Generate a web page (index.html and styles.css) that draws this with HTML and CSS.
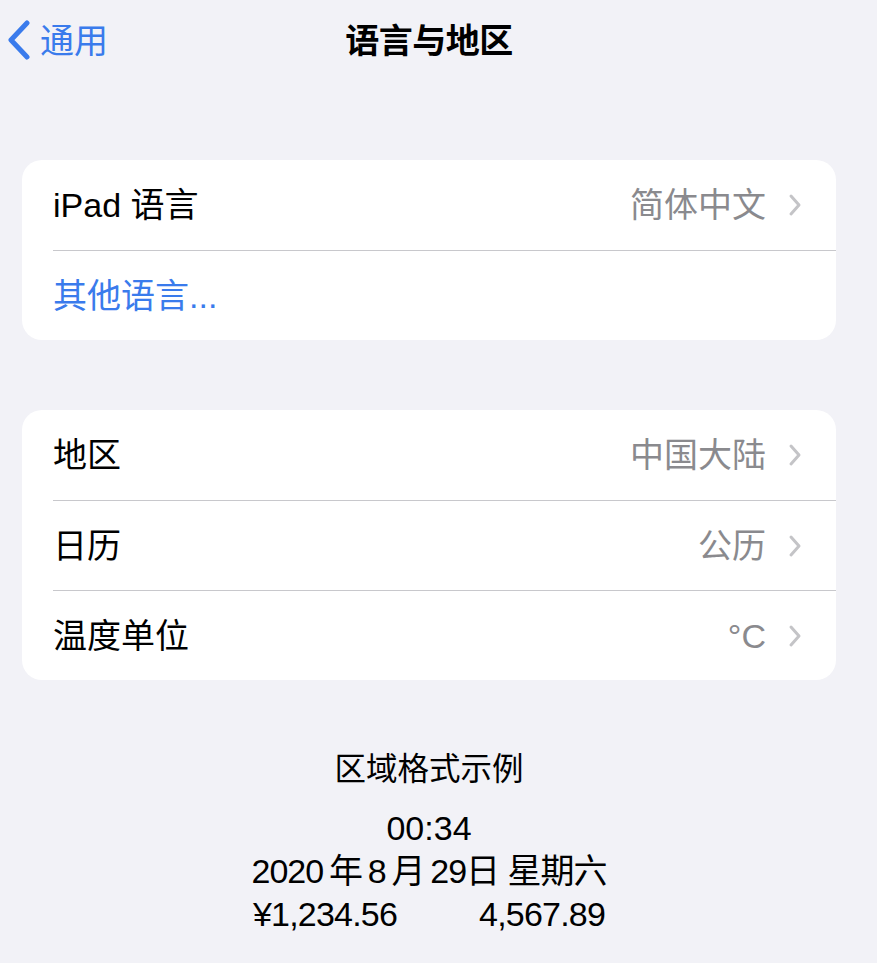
FILE: index.html
```html
<!DOCTYPE html>
<html lang="zh-CN">
<head>
<meta charset="utf-8">
<title>语言与地区</title>
<link rel="stylesheet" href="styles.css">
</head>
<body>
<div class="screen">
  <header class="nav">
    <a class="back">
      <svg class="back-icon" width="25" height="40" viewBox="0 0 25 40"><path d="M21 3 L5 20 L21 37" fill="none" stroke="currentColor" stroke-width="5" stroke-linecap="round" stroke-linejoin="round"/></svg>
      <span>通用</span>
    </a>
    <h1 class="title">语言与地区</h1>
    <div></div>
  </header>

  <section class="card first">
    <div class="row">
      <span class="label">iPad 语言</span>
      <span class="value">简体中文</span>
      <svg class="chev" width="14" height="24" viewBox="0 0 14 24"><path d="M3 3 L11 12 L3 21" fill="none" stroke="currentColor" stroke-width="3" stroke-linecap="round" stroke-linejoin="round"/></svg>
    </div>
    <div class="row">
      <span class="label link">其他语言...</span>
    </div>
  </section>

  <section class="card second">
    <div class="row">
      <span class="label">地区</span>
      <span class="value">中国大陆</span>
      <svg class="chev" width="14" height="24" viewBox="0 0 14 24"><path d="M3 3 L11 12 L3 21" fill="none" stroke="currentColor" stroke-width="3" stroke-linecap="round" stroke-linejoin="round"/></svg>
    </div>
    <div class="row">
      <span class="label">日历</span>
      <span class="value">公历</span>
      <svg class="chev" width="14" height="24" viewBox="0 0 14 24"><path d="M3 3 L11 12 L3 21" fill="none" stroke="currentColor" stroke-width="3" stroke-linecap="round" stroke-linejoin="round"/></svg>
    </div>
    <div class="row">
      <span class="label">温度单位</span>
      <span class="value">°C</span>
      <svg class="chev" width="14" height="24" viewBox="0 0 14 24"><path d="M3 3 L11 12 L3 21" fill="none" stroke="currentColor" stroke-width="3" stroke-linecap="round" stroke-linejoin="round"/></svg>
    </div>
  </section>

  <section class="example">
    <div class="example-title">区域格式示例</div>
    <div class="example-lines">
      <div>00:34</div>
      <div class="date">2020&#8201;年&#8201;8&#8201;月&#8201;29日 星期六</div>
      <div class="money"><span>¥1,234.56</span><span>4,567.89</span></div>
    </div>
  </section>
</div>
</body>
</html>
```

FILE: styles.css
```css
html, body {
  margin: 0;
  padding: 0;
  background: #f2f2f7;
}
body {
  font-family: "Liberation Sans", "Noto Sans CJK SC", sans-serif;
  color: #000;
  width: 877px;
  height: 963px;
  overflow: hidden;
}
.screen {
  width: 858px;
}
.nav {
  height: 82px;
  display: grid;
  grid-template-columns: 1fr auto 1fr;
  align-items: center;
}
.back {
  display: flex;
  align-items: center;
  color: #3a7bec;
  font-size: 34px;
  line-height: 40px;
  padding-left: 6px;
}
.back-icon {
  margin-right: 9px;
  margin-top: -2px;
}
.title {
  margin: 0;
  font-size: 34px;
  font-weight: 700;
  line-height: 40px;
  letter-spacing: -0.5px;
}
.card {
  margin-left: 22px;
  margin-right: 22px;
  background: #fff;
  border-radius: 20px;
  padding-left: 31px;
  overflow: hidden;
}
.card.first {
  margin-top: 78px;
}
.card.second {
  margin-top: 70px;
}
.row {
  height: 90px;
  display: flex;
  align-items: center;
  font-size: 34px;
  line-height: 40px;
  padding-right: 34px;
  box-sizing: border-box;
}
.row + .row {
  border-top: 1px solid #c8c8cc;
}
.label {
  flex: 1;
}
.link {
  color: #3a7bec;
}
.value {
  color: #8a8a8e;
}
.chev {
  color: #c4c4c7;
  margin-left: 22px;
}
.example {
  margin-top: 68px;
  text-align: center;
  font-size: 34px;
}
.example-title {
  font-size: 31.5px;
  line-height: 43px;
}
.example-lines {
  margin-top: 16px;
  line-height: 43px;
}
.date {
  letter-spacing: -1px;
}
.money {
  display: flex;
  justify-content: center;
  gap: 82px;
  letter-spacing: -0.8px;
}
```
